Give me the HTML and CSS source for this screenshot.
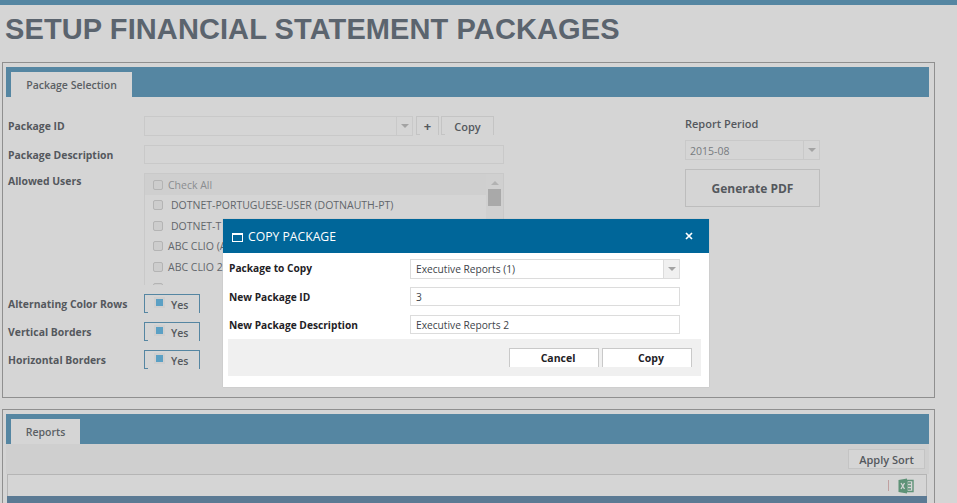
FILE: index.html
```html
<!DOCTYPE html>
<html lang="en">
<head>
<meta charset="utf-8">
<title>Setup Financial Statement Packages</title>
<link rel="stylesheet" href="styles.css">
</head>
<body>
<div class="topbar"></div>
<h1 class="title">SETUP FINANCIAL STATEMENT PACKAGES</h1>

<section class="panel panel-selection">
  <div class="tabbar"><div class="tab tab-selection">Package Selection</div></div>
  <div class="selection-body">
    <div class="form">
      <div class="row row-id">
        <label class="label">Package ID</label>
        <div class="combo combo-id"><span class="combo-text"></span><span class="combo-arrow"><i class="tri"></i></span></div>
        <button class="btn btn-plus">+</button>
        <button class="btn btn-copy">Copy</button>
      </div>
      <div class="row row-desc">
        <label class="label">Package Description</label>
        <div class="input input-desc"></div>
      </div>
      <div class="row row-users">
        <label class="label label-users">Allowed Users</label>
        <div class="listbox">
          <div class="list-items">
            <div class="item item-all"><i class="check"></i><span class="muted">Check All</span></div>
            <div class="item item-in"><i class="check"></i><span>DOTNET-PORTUGUESE-USER (DOTNAUTH-PT)</span></div>
            <div class="item item-in"><i class="check"></i><span>DOTNET-T</span></div>
            <div class="item"><i class="check"></i><span>ABC CLIO (A</span></div>
            <div class="item"><i class="check"></i><span>ABC CLIO 2</span></div>
            <div class="item"><i class="check"></i></div>
          </div>
          <div class="scroll"><i class="scroll-up"></i><i class="scroll-thumb"></i></div>
        </div>
      </div>
      <div class="row row-toggle">
        <label class="label">Alternating Color Rows</label>
        <button class="toggle"><i class="toggle-box"></i>Yes</button>
      </div>
      <div class="row row-toggle">
        <label class="label">Vertical Borders</label>
        <button class="toggle"><i class="toggle-box"></i>Yes</button>
      </div>
      <div class="row row-toggle">
        <label class="label">Horizontal Borders</label>
        <button class="toggle"><i class="toggle-box"></i>Yes</button>
      </div>
    </div>
    <div class="period">
      <label class="label period-label">Report Period</label>
      <div class="combo combo-period"><span class="combo-text">2015-08</span><span class="combo-arrow"><i class="tri"></i></span></div>
      <button class="btn-generate">Generate PDF</button>
    </div>
  </div>
</section>

<section class="panel panel-reports">
  <div class="tabbar"><div class="tab tab-reports">Reports</div></div>
  <div class="reports-actions"><button class="btn-sort">Apply Sort</button></div>
  <div class="grid-toolbar">
    <span class="sep"></span>
    <svg class="xls" width="16" height="16" viewBox="0 0 16 16" aria-hidden="true">
      <path d="M9 0.5 L0.5 2 V14 L9 15.5 Z" fill="#5e9277"/>
      <path d="M9 2.5 H15 V13.5 H9 Z" fill="none" stroke="#5e9277" stroke-width="1.4"/>
      <path d="M10 5 H13 M10 8 H13 M10 11 H13" stroke="#5e9277" stroke-width="1.6"/>
      <path d="M3 5 L6.5 11 M6.5 5 L3 11" stroke="#d5d5d5" stroke-width="1.3"/>
    </svg>
  </div>
  <div class="grid-head"></div>
</section>

<div class="modal">
  <div class="modal-head">
    <svg class="modal-icon" width="11" height="9" viewBox="0 0 11 9" aria-hidden="true">
      <rect x="0.5" y="0.5" width="10" height="8" fill="none" stroke="#fff"/>
      <rect x="0" y="0" width="11" height="2" fill="#fff"/>
    </svg>
    <span class="modal-title">COPY PACKAGE</span>
    <svg class="modal-close" width="8" height="8" viewBox="0 0 8 8" aria-hidden="true">
      <path d="M1 1 L7 7 M7 1 L1 7" stroke="#fff" stroke-width="1.7"/>
    </svg>
  </div>
  <div class="modal-body">
    <div class="m-row m-row-first">
      <label class="m-label">Package to Copy</label>
      <div class="m-combo"><span class="m-combo-text">Executive Reports (1)</span><span class="m-arrow"><i class="tri"></i></span></div>
    </div>
    <div class="m-row m-row-id">
      <label class="m-label m-label-low">New Package ID</label>
      <div class="m-input">3</div>
    </div>
    <div class="m-row m-row-desc">
      <label class="m-label m-label-low">New Package Description</label>
      <div class="m-input">Executive Reports 2</div>
    </div>
    <div class="m-footer">
      <button class="m-btn">Cancel</button>
      <button class="m-btn">Copy</button>
    </div>
  </div>
</div>
</body>
</html>
```
FILE: styles.css
```css
* { box-sizing: border-box; }
html, body { height: 100%; }
body {
  margin: 0;
  background: #d5d5d5;
  font-family: "Open Sans", sans-serif;
  font-size: 11px;
  color: #4f5358;
  overflow: hidden;
}
button { font-family: inherit; padding: 0; cursor: default; }
.topbar { height: 5px; background: #5586a2; }
.title {
  margin: 0;
  height: 57px;
  padding: 8px 0 0 5px;
  font: bold 29px/32px "Liberation Sans", Arial, sans-serif;
  letter-spacing: 0.1px;
  color: #5b646e;
}
.panel {
  margin-left: 2px;
  width: 933px;
  border: 1px solid #8f8f8f;
  padding: 4px 5px 0 3px;
}
.panel-selection { height: 336px; }
.panel-reports { margin-top: 11px; height: 110px; }
.tabbar {
  height: 30px;
  background: #5586a2;
  padding: 5px 0 0 5px;
  display: flex;
}
.tab {
  height: 25px;
  background: #d5d5d5;
  font-weight: 600;
  font-size: 10.5px;
  line-height: 26px;
  color: #5a5f64;
  text-align: center;
}
.tab-selection { width: 121px; }
.tab-reports { width: 69px; }
.selection-body { display: flex; padding: 19px 0 0 2px; }
.form { width: 496px; }
.row { display: flex; align-items: flex-start; }
.label {
  width: 136px;
  flex: none;
  font-weight: 700;
  font-size: 10.4px;
  color: #54585d;
}
.row-id { height: 20px; line-height: 20px; }
.row-desc { margin-top: 9px; height: 19px; line-height: 20px; }
.row-users { margin-top: 9px; }
.label-users { line-height: 16px; }
.combo {
  display: flex;
  height: 20px;
  border: 1px solid #c9c9c9;
  background: #d5d5d5;
}
.combo-text { flex: 1; padding-left: 4px; line-height: 20px; color: #777b80; font-size: 10.5px; }
.combo-arrow {
  width: 16px;
  border-left: 1px solid #c9c9c9;
  display: flex;
  align-items: center;
  justify-content: center;
}
.tri {
  width: 0;
  height: 0;
  border-left: 4px solid transparent;
  border-right: 4px solid transparent;
  border-top: 4px solid #a3a3a3;
}
.combo-id { width: 269px; }
.btn {
  position: relative;
  height: 19px;
  margin-left: 3px;
  background: #d5d5d5;
  border: 1px solid #c4c4c4;
  border-bottom: 0;
  color: #54585d;
  font-weight: 600;
  font-size: 11px;
  line-height: 19px;
}
.btn::after {
  content: "";
  position: absolute;
  left: -1px;
  bottom: 0;
  width: 4px;
  height: 1px;
  background: #c4c4c4;
}
.btn-plus { width: 23px; font-weight: 700; font-size: 13px; }
.btn-copy { width: 53px; margin-left: 2px; }
.input-desc {
  width: 360px;
  height: 19px;
  border: 1px solid #c9c9c9;
}
.listbox {
  width: 360px;
  height: 112px;
  border: 1px solid #c9c9c9;
  border-bottom: 0;
  display: flex;
  overflow: hidden;
}
.list-items { flex: 1; }
.item {
  display: flex;
  align-items: center;
  height: 20.6px;
  padding-left: 8px;
  color: #62666b;
  font-size: 10.5px;
}
.item-all { height: 21px; background: #cfcfcf; }
.item-in span { margin-left: 3px; }
.muted { color: #8a8d90; }
.check {
  width: 10px;
  height: 10px;
  flex: none;
  margin-right: 5px;
  border: 1px solid #b4b4b4;
  border-radius: 2px;
  background: #cdcdcd;
}
.scroll {
  width: 17px;
  flex: none;
  background: #d0d0d0;
  display: flex;
  flex-direction: column;
  align-items: center;
  padding-top: 7px;
}
.scroll-up {
  width: 0;
  height: 0;
  border-left: 4px solid transparent;
  border-right: 4px solid transparent;
  border-bottom: 4px solid #b2b2b2;
}
.scroll-thumb {
  width: 13px;
  height: 17px;
  margin-top: 4px;
  background: #a9a9a9;
}
.row-toggle { height: 20px; margin-top: 8px; line-height: 21px; }
.row-users + .row-toggle { margin-top: 9px; }
.toggle {
  position: relative;
  display: flex;
  align-items: center;
  width: 56px;
  height: 19px;
  background: #d5d5d5;
  border: 1px solid #5586a2;
  border-bottom: 0;
  color: #54585d;
  font-weight: 600;
  font-size: 10.5px;
  padding: 2px 0 0 9px;
}
.toggle::after {
  content: "";
  position: absolute;
  left: -1px;
  bottom: 0;
  width: 4px;
  height: 1px;
  background: #5586a2;
}
.toggle-box {
  width: 11px;
  height: 11px;
  margin: -5px 6px 0 0;
  border: 2px solid #cfcfcf;
  background: #5ba0c4;
}
.period { margin-left: 181px; width: 135px; }
.period-label { display: block; height: 16px; margin-top: 0; line-height: 16px; width: auto; font-weight: 600; font-size: 11px; }
.combo-period { width: 135px; margin-top: 8px; margin-bottom: 9px; }
.btn-generate {
  width: 135px;
  height: 38px;
  border: 1px solid #bdbdbd;
  background: #d5d5d5;
  color: #54585d;
  font-weight: 700;
  font-size: 12px;
}
.reports-actions {
  height: 30px;
  background: #cfcfcf;
  display: flex;
  justify-content: flex-end;
  padding: 5px 4px 0 0;
  margin-bottom: 0;
}
.btn-sort {
  width: 77px;
  height: 20px;
  background: #d5d5d5;
  border: 1px solid #c4c4c4;
  color: #54585d;
  font-weight: 600;
  font-size: 11px;
}
.grid-toolbar {
  margin-left: 1px;
  margin-right: 2px;
  height: 22px;
  border: 1px solid #b5b5b5;
  border-bottom: 0;
  background: #d5d5d5;
  display: flex;
  align-items: center;
  justify-content: flex-end;
  padding-right: 12px;
}
.sep { width: 1px; height: 11px; background: #c0a0a0; margin-right: 9px; }
.grid-head { margin-left: 1px; margin-right: 2px; height: 10px; background: #5b7a94; }
.modal {
  position: absolute;
  left: 223px;
  top: 219px;
  width: 486px;
  height: 168px;
  background: #fff;
  box-shadow: 0 0 1px rgba(0,0,0,.2);
  color: #222;
}
.modal-head {
  height: 34px;
  background: #006699;
  display: flex;
  align-items: center;
  padding: 0 16px 0 9px;
  color: #fff;
}
.modal-icon { flex: none; margin: 3px 5px 0 0; }
.modal-title { flex: 1; font-size: 12.2px; }
.modal-close { flex: none; }
.modal-body { padding: 0 8px 0 5px; }
.m-row { display: flex; align-items: flex-start; }
.m-label { width: 182px; padding-left: 1px; flex: none; font-weight: 700; font-size: 10.2px; color: #1f2226; line-height: 19px; }
.m-label-low { line-height: 21px; }
.m-row-first { padding-top: 6px; height: 26px; }
.m-row-id { margin-top: 8px; height: 19px; }
.m-row-desc { margin-top: 9px; height: 19px; }
.m-combo, .m-input {
  width: 270px;
  margin-left: 0;
  border: 1px solid #dcdcdc;
  background: #fff;
  font-size: 10.2px;
  color: #40444a;
}
.m-combo { display: flex; height: 20px; }
.m-combo-text { flex: 1; padding-left: 5px; line-height: 19px; }
.m-arrow {
  width: 16px;
  background: #f0f0f0;
  border-left: 1px solid #dcdcdc;
  display: flex;
  align-items: center;
  justify-content: center;
}
.m-input { height: 19px; padding-left: 5px; line-height: 19px; }
.m-footer {
  margin: 5px 0 0 0;
  height: 37px;
  background: #f0f0f0;
  display: flex;
  justify-content: flex-end;
  gap: 3px;
  padding: 9px 9px 0 0;
}
.m-btn {
  width: 90px;
  height: 19px;
  background: #fff;
  border: 1px solid #c9c9c9;
  border-bottom: 0;
  color: #1f2226;
  font-weight: 700;
  font-size: 10.5px;
  padding-left: 8px;
}
```
